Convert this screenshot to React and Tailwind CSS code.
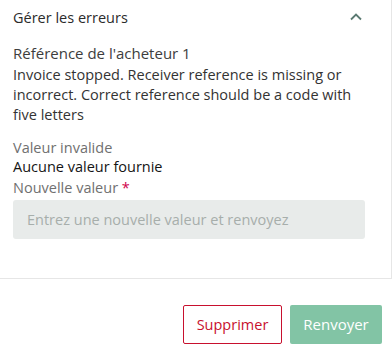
import React from "react";

export default function App() {
  return (
    <div className="w-[392px] h-[361px] bg-white font-['Open_Sans',sans-serif] text-[14.5px]">
      <div className="border-r border-b border-[#e6e6e6] h-[279px] pl-[13px] pr-[26px]">
        <div className="flex items-center justify-between h-[36px]">
          <span className="text-[14.5px] text-[#2b2b2b]">Gérer les erreurs</span>
          <svg width="14" height="14" viewBox="0 0 14 14" className="mr-[2px] -mt-[2px]">
            <path d="M2 9.5 L7 4.5 L12 9.5" fill="none" stroke="#5b7a72" strokeWidth="1.8" />
          </svg>
        </div>
        <div className="mt-[7px] text-[15px] text-[#3d3d3d] leading-[20px]">Référence de l'acheteur 1</div>
        <div className="mt-[2px] text-[#333333] leading-[20px]">
          Invoice stopped. Receiver reference is missing or incorrect. Correct reference should be a code with five letters
        </div>
        <div className="mt-[13px] text-[#707070] leading-[19px]">Valeur invalide</div>
        <div className="text-[#141414] leading-[19px]">Aucune valeur fournie</div>
        <div className="mt-[2px] text-[#707070] leading-[19px]">
          Nouvelle valeur <span className="text-[#d0004b]">*</span>
        </div>
        <div className="mt-[3px] h-[39px] rounded-[3px] bg-[#e8ebea] flex items-center px-[14px] text-[#a7aeab]">
          Entrez une nouvelle valeur et renvoyez
        </div>
      </div>
      <div className="flex justify-end gap-[8px] pr-[10px] pt-[26px]">
        <button className="w-[99px] h-[39px] rounded-[2px] border border-[#c8102e] text-[#c8102e] bg-white">Supprimer</button>
        <button className="w-[92px] h-[39px] rounded-[2px] bg-[#82c4a5] text-white text-[15px] font-medium">Renvoyer</button>
      </div>
    </div>
  );
}
